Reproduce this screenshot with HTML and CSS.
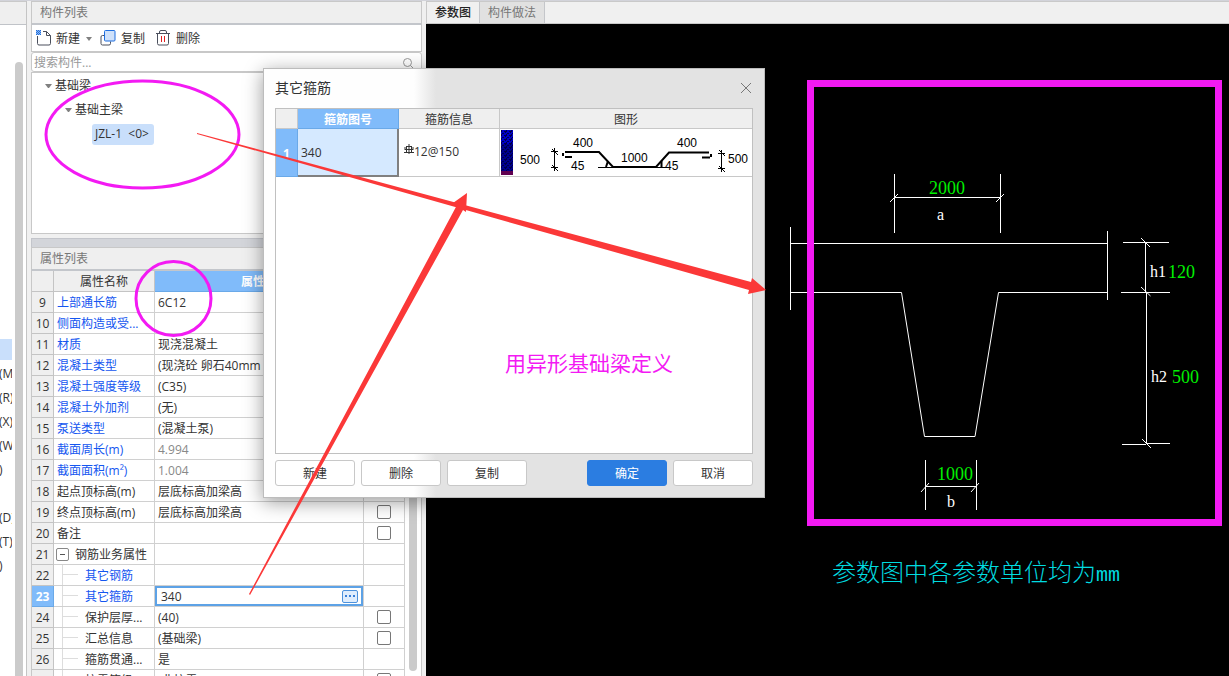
FILE: index.html
```html
<!DOCTYPE html>
<html lang="zh-CN">
<head>
<meta charset="utf-8">
<title>构件列表</title>
<link rel="stylesheet" href="styles.css">
</head>
<body>
<div class="app">
  <aside class="nav">
    <div class="nav-head"></div>
    <div class="nav-body">
      <ul class="nav-list">
        <li class="active"></li><li>(M</li><li>(R)</li><li>(X)</li><li>(W</li><li>)</li><li></li><li>(D)</li><li>(T)</li><li>)</li>
      </ul>
      <div class="nav-scroll"></div>
    </div>
  </aside>

  <div class="side">
    <section class="components">
      <h2 class="panel-title">构件列表</h2>
      <div class="toolbar">
        <button type="button" class="tool">
          <svg width="16" height="16" viewBox="0 0 16 16"><path d="M1.500 6v7.500a1.500 1.500 0 0 0 1.500 1.500h10a1.500 1.500 0 0 0 1.500-1.500V5.500L10.500 1.500H7M10.500 1.500v4h4" fill="none" stroke="#4a4f5c"/><path d="M0 0h1v1H0zM2 0h1v1H2zM4 0h1v1H4zM1 1h1v1H1zM3 1h1v1H3zM0 2h1v1H0zM2 2h1v1H2zM4 2h1v1H4zM1 3h1v1H1zM3 3h1v1H3zM0 4h1v1H0zM2 4h1v1H2zM4 4h1v1H4z" fill="#1f6fe0"/><path d="M0 0h5v5H0z" fill="#1f6fe0" opacity=".5"/></svg>
          新建<span class="drop"></span></button>
        <button type="button" class="tool">
          <svg width="16" height="16" viewBox="0 0 16 16"><path d="M4.500 5.500h-2a1.500 1.500 0 0 0-1.500 1.500v6.500a1.500 1.500 0 0 0 1.500 1.500h6.500a1.500 1.500 0 0 0 1.500-1.500v-2" fill="none" stroke="#4a4f5c"/><rect x="4.500" y="0.500" width="10.500" height="10.500" rx="1" fill="#cfe1fa" stroke="#1f6fe0"/></svg>
          复制</button>
        <button type="button" class="tool">
          <svg width="16" height="16" viewBox="0 0 16 16"><path d="M1 3.500h14M2.500 3.500v10a1.500 1.500 0 0 0 1.500 1.500h8a1.500 1.500 0 0 0 1.500-1.500v-10M4.500 3.500v-1.500a1.500 1.500 0 0 1 1.500-1.500h4a1.500 1.500 0 0 1 1.500 1.500v1.500" fill="none" stroke="#4a4f5c"/><path d="M6.500 6v6M9.500 6v6" stroke="#e02020"/></svg>
          删除</button>
      </div>
      <label class="search">
        <input type="text" placeholder="搜索构件..." aria-label="搜索构件">
        <svg width="12" height="12" viewBox="0 0 12 12"><circle cx="5.500" cy="5.500" r="4" fill="none" stroke="#999"/><path d="M8.500 8.500l2.500 2.500" stroke="#999"/></svg>
      </label>
      <div class="tree">
        <div class="node"><span class="drop"></span>基础梁</div>
        <div class="node level2"><span class="drop"></span>基础主梁</div>
        <div class="node level3"><span class="picked">JZL-1&nbsp; &lt;0&gt;</span></div>
      </div>
    </section>

    <section class="properties">
      <div class="splitter"></div>
      <h2 class="panel-title">属性列表</h2>
      <div class="grid-wrap">
        <table class="grid">
          <colgroup><col class="c-no"><col class="c-name"><col><col class="c-check"></colgroup>
          <thead><tr><th></th><th>属性名称</th><th class="sel">属性值</th><th>附加</th></tr></thead>
          <tbody>
            <tr><th>9</th><td class="link">上部通长筋</td><td>6C12</td><td><input type="checkbox" aria-label="附加 9"></td></tr>
            <tr><th>10</th><td class="link">侧面构造或受...</td><td></td><td><input type="checkbox" aria-label="附加 10"></td></tr>
            <tr><th>11</th><td class="link">材质</td><td>现浇混凝土</td><td><input type="checkbox" aria-label="附加 11"></td></tr>
            <tr><th>12</th><td class="link">混凝土类型</td><td>(现浇砼 卵石40mm 32.5)</td><td><input type="checkbox" aria-label="附加 12"></td></tr>
            <tr><th>13</th><td class="link">混凝土强度等级</td><td>(C35)</td><td><input type="checkbox" aria-label="附加 13"></td></tr>
            <tr><th>14</th><td class="link">混凝土外加剂</td><td>(无)</td><td></td></tr>
            <tr><th>15</th><td class="link">泵送类型</td><td>(混凝土泵)</td><td></td></tr>
            <tr><th>16</th><td class="link">截面周长(m)</td><td class="dim">4.994</td><td><input type="checkbox" aria-label="附加 16"></td></tr>
            <tr><th>17</th><td class="link">截面面积(m²)</td><td class="dim">1.004</td><td><input type="checkbox" aria-label="附加 17"></td></tr>
            <tr><th>18</th><td>起点顶标高(m)</td><td>层底标高加梁高</td><td></td></tr>
            <tr><th>19</th><td>终点顶标高(m)</td><td>层底标高加梁高</td><td><input type="checkbox" aria-label="附加 19"></td></tr>
            <tr><th>20</th><td>备注</td><td></td><td><input type="checkbox" aria-label="附加 20"></td></tr>
            <tr><th>21</th><td class="group"><button type="button" class="fold" aria-label="折叠"></button>钢筋业务属性</td><td></td><td></td></tr>
            <tr><th>22</th><td class="child link">其它钢筋</td><td></td><td></td></tr>
            <tr><th class="sel">23</th><td class="child link">其它箍筋</td><td class="edit"><div class="editor"><input type="text" value="340" aria-label="其它箍筋"><button type="button" class="more" aria-label="更多"><i></i><i></i><i></i></button></div></td><td></td></tr>
            <tr><th>24</th><td class="child">保护层厚...</td><td>(40)</td><td><input type="checkbox" aria-label="附加 24"></td></tr>
            <tr><th>25</th><td class="child">汇总信息</td><td>(基础梁)</td><td><input type="checkbox" aria-label="附加 25"></td></tr>
            <tr><th>26</th><td class="child">箍筋贯通...</td><td>是</td><td></td></tr>
            <tr><th></th><td class="child">抗震等级...</td><td>(非抗震)</td><td><input type="checkbox" aria-label="附加 27"></td></tr>
          </tbody>
        </table>
        <div class="grid-scroll"><div class="thumb"></div></div>
      </div>
    </section>
  </div>

  <main class="view">
    <div class="tabs"><button type="button" class="tab on">参数图</button><button type="button" class="tab">构件做法</button></div>
    <div class="canvas">
      <svg class="drawing" width="803" height="652" viewBox="426 24 803 652">
        <g class="lines">
          <path d="M894.500 174v59M1000.500 174v59M894 197.500h107M890 202l8-8M996 202l8-8"/>
          <path d="M790.500 227v83M1107.500 231v69M790 243.500h317M790 292.500h111.500L924.500 436.500h50.500L998.500 292.500h109"/>
          <path d="M1123 242.500h46M1121 292.500h49M1145.500 242v50M1146.500 292v152M1141 238l9 9M1141 287l9.500 9M1122 444.500h24M1146 443.500h24M1142 439l9 9"/>
          <path d="M925.500 460v50M976.500 460v50M925 486.500h52M921 492l8-9M971 492l8-9"/>
        </g>
        <g class="dims"><text x="929" y="194">2000</text><text x="1168" y="278">120</text><text x="1172" y="383">500</text><text x="937" y="480">1000</text></g>
        <g class="names"><text x="937" y="220">a</text><text x="1150" y="277">h1</text><text x="1151" y="382">h2</text><text x="947" y="507">b</text></g>
        <text class="caption" x="832" y="581">参数图中各参数单位均为<tspan class="unit">mm</tspan></text>
      </svg>
    </div>
  </main>

  <div class="dialog" role="dialog" aria-label="其它箍筋">
    <div class="dialog-head"><h1>其它箍筋</h1>
      <button type="button" class="close" aria-label="关闭"><svg width="12" height="12" viewBox="0 0 12 12"><path d="M1 1l10 10M11 1L1 11" stroke="#777"/></svg></button></div>
    <div class="sheet">
      <table class="stirrups">
        <colgroup><col class="s-no"><col class="s-col"><col class="s-col"><col></colgroup>
        <thead><tr><th></th><th class="sel">箍筋图号</th><th>箍筋信息</th><th>图形</th></tr></thead>
        <tbody><tr><th class="sel">1</th><td class="current">340</td>
          <td class="info"><svg width="10" height="12" viewBox="0 0 10 12"><path d="M0 8.500h10M5 0v10M2.500 2v6.500M7.500 2v6.500M2.500 2.500h5M1 3v3M9 3v3M1 5.500h8" fill="none" stroke="#333"/></svg>12@150</td>
          <td class="shape"><svg width="252" height="47" viewBox="500 129 252 47">
            <defs><pattern id="grain" width="5" height="4" patternUnits="userSpaceOnUse"><path d="M0 0h1v1H0zM2 1h2v1H2zM1 2h1v1H1zM4 3h1v1H4zM0 3h2v1H0z" fill="#00004a"/></pattern></defs>
            <rect x="501" y="130" width="12" height="42" fill="#0000c8"/><rect x="501" y="144" width="12" height="28" fill="#000090"/><rect x="501" y="130" width="12" height="42" fill="url(#grain)"/><rect x="501" y="171" width="12" height="4" fill="#600050"/>
            <path d="M565 152h34l14 15h43l13-14.500h40M565 157h7M702 157.500h8" fill="none" stroke="#000" stroke-width="2"/>
            <path d="M562 153h2v3h-2zM710 154h2v3h-2z"/>
            <path d="M598 167.500h15M554.500 148v23M551 151.500h7M551 167.500h7M552 149l6 6M552 165l6 6M721.500 150v22M718 153.500h7M718 168.500h7M719 150l6 6M719 166l6 6M656 167.500h10" fill="none" stroke="#000"/>
            <path d="M608 161l-2 6M661.500 161v6" fill="none" stroke="#000" stroke-width="2"/>
            <g class="marks"><text x="520" y="164">500</text><text x="573" y="147">400</text><text x="571" y="170">45</text><text x="621" y="162">1000</text><text x="677" y="147">400</text><text x="665" y="170">45</text><text x="728" y="163">500</text></g>
          </svg></td></tr></tbody>
      </table>
    </div>
    <div class="actions"><button type="button">新建</button><button type="button">删除</button><button type="button">复制</button><span class="fill"></span><button type="button" class="primary">确定</button><button type="button">取消</button></div>
  </div>

  <svg class="notes" width="1229" height="676" viewBox="0 0 1229 676">
    <g fill="none" stroke="#f31af3"><ellipse cx="142.500" cy="134.500" rx="96.500" ry="53.500" stroke-width="3"/><ellipse cx="173.500" cy="298.500" rx="37.500" ry="37" stroke-width="3"/><rect x="810.500" y="83.500" width="408" height="439" stroke-width="7"/></g>
    <g fill="#fb3838"><path d="M197 133L751 282L752 278L766 290L748 294L749 290L197 134z"/><path d="M249 594L457 205L453 203L467 193L466 212L463 210L250 595z"/></g>
    <text class="remark" x="505" y="371">用异形基础梁定义</text>
  </svg>
</div>
</body>
</html>
```
FILE: styles.css
```css
* { box-sizing: border-box; }
body { margin: 0; font: 12px/16px "Open Sans", "Noto Sans CJK SC", sans-serif; color: #333; background: #f0f0f0; overflow: hidden; }
button, input { font: inherit; color: inherit; }
h1, h2, ul { margin: 0; padding: 0; }
.app { position: relative; display: flex; height: 100vh; overflow: hidden; border-top: 1px solid #d2d3da; }

.nav { width: 27px; flex: none; display: flex; flex-direction: column; border-right: 1px solid #c4c4c4; margin-right: 4px; }
.nav-head { height: 24px; flex: none; border-top: 1px solid #c9c9c9; border-bottom: 1px solid #c0c3c8; background: #efefef; }
.nav-body { flex: 1; display: flex; background: #fff; }
.nav-list { list-style: none; width: 12px; margin-top: 314px; overflow: hidden; }
.nav-list li { height: 24px; line-height: 24px; white-space: nowrap; text-indent: -1px; }
.nav-list .active { height: 21px; margin-bottom: 2px; background: #c9dffb; }
.nav-scroll { width: 8px; margin: 37px 0 0 3px; background: #cbcbcb; border-radius: 4px 4px 0 0; }

.side { width: 391px; flex: none; display: flex; flex-direction: column; margin-right: 4px; }
.panel-title { height: 24px; padding: 0 8px; font-size: 12px; font-weight: 400; line-height: 22px; color: #777; background: #efefef; border: 1px solid #c8c8c8; border-bottom: 2px solid #c3c6cb; }
.toolbar { display: flex; gap: 8px; height: 27px; padding: 2px 4px 0; background: #fff; border: 1px solid #c8c8c8; border-top: 0; }
.tool { display: flex; align-items: center; gap: 4px; padding: 0; border: 0; background: none; }
.tool svg { margin-bottom: 2px; }
.drop { width: 7px; border: 3px solid transparent; border-top: 4px solid #808080; border-bottom: 0; }
.tool .drop { width: 6px; margin-left: 2px; }
.tool + .tool { gap: 5px; }
.tool + .tool + .tool { margin-left: 2px; }
.search { display: flex; align-items: center; height: 20px; padding: 1px 7px 0 2px; background: #fff; border: 1px solid #c8c8c8; border-radius: 3px; }
.search input { flex: 1; height: 16px; border: 0; padding: 0; background: none; outline: 0; }
.search input::placeholder { color: #999; }
.tree { height: 162px; padding-top: 1px; background: #fff; border: 1px solid #c8c8c8; }
.node { display: flex; align-items: center; gap: 3px; height: 24px; padding-left: 13px; }
.level2 { padding-left: 33px; }
.level3 { padding-left: 60px; }
.picked { padding: 2px 5px 3px 3px; background: #c9dffb; border-radius: 3px; }

.properties { display: flex; flex-direction: column; flex: 1; min-height: 0; margin-top: 4px; }
.splitter { height: 9px; flex: none; background: #d3d5da; border: 1px solid #c3c5cb; border-bottom: 0; }
.properties .panel-title { flex: none; }
.grid-wrap { display: flex; flex: 1; min-height: 0; overflow: hidden; border: 1px solid #c8c8c8; border-width: 0 1px; background: #fff; }
.grid { flex: 1; border-collapse: separate; border-spacing: 0; table-layout: fixed; }
.c-no { width: 22px; } .c-name { width: 101px; } .c-check { width: 41px; }
.grid th, .grid td { height: 21px; padding: 2px 0 0 3px; line-height: 16px; white-space: nowrap; overflow: hidden; border: 0 solid #d0d0d0; border-width: 0 1px 1px 0; font-weight: 400; text-align: left; }
.grid th { padding: 2px 0 0; text-align: center; background: #efefef; border-color: #c4c4c4; }
.grid .sel, .stirrups .sel { background: #80bbfa; color: #fff; font-weight: 700; border-color: #6aa9e8; }
.grid .link { color: #1456f0; }
.grid .dim { color: #888; }
.grid td:last-child { padding: 0; text-align: center; }
.grid input[type=checkbox] { appearance: none; display: block; width: 14px; height: 14px; margin: 0 auto; border: 1px solid #777; border-radius: 2px; background: #fff; }
.grid .group { padding-left: 2px; }
.fold { display: inline-block; vertical-align: middle; width: 13px; height: 13px; margin: 0 6px 2px 0; padding: 0 3px; border: 1px solid #888; border-radius: 2px; background: linear-gradient(#555, #555) center / 5px 1px no-repeat #fff; }
.grid .child { padding-left: 31px; background: linear-gradient(#ddd, #ddd) 8px 0 / 1px 100% no-repeat, linear-gradient(#ddd, #ddd) 8px 9px / 16px 1px no-repeat; }
.grid .edit { padding: 0; }
.editor { display: flex; align-items: center; height: 20px; padding-right: 3px; border: 2px solid #5da2e6; }
.editor input { flex: 1; min-width: 0; height: 16px; padding: 1px 0 0 4px; border: 0; outline: 0; }
.more { display: flex; justify-content: center; align-items: center; gap: 2px; width: 16px; height: 13px; padding: 0; border: 1px solid #4d92dc; border-radius: 2px; background: #dfedfd; }
.more i { width: 2px; height: 2px; background: #3a80d8; }
.grid-scroll { width: 16px; flex: none; display: flex; justify-content: center; padding: 0 0 5px; }
.thumb { width: 8px; background: #cbcbcb; border-radius: 4px; }

.view { flex: 1; min-width: 0; display: flex; flex-direction: column; }
.tabs { display: flex; height: 23px; flex: none; border: 1px solid #c9c9c9; border-width: 1px 0 1px 1px; }
.tab { padding: 1px 8px 0; border: 0; border-right: 1px solid #c4c6ca; background: #e1e1e1; color: #777; }
.tab.on { background: #f0f0f0; color: #222; font-weight: 500; }
.canvas { flex: 1; min-height: 0; overflow: hidden; background: #000; }
.drawing { display: block; }
.lines { fill: none; stroke: #fff; stroke-width: 1; }
.dims { font: 18px "Liberation Serif", serif; fill: #00f000; }
.names { font: 16px "Liberation Serif", serif; fill: #fff; }
.caption { font: 300 24px "Noto Sans CJK SC", sans-serif; fill: #00dce0; }
.unit { font: 20px "Liberation Mono", monospace; }

.dialog { position: absolute; left: 263px; top: 67px; width: 502px; display: flex; flex-direction: column; padding: 0 11px 11px; border: 1px solid #bcbcbc; background: linear-gradient(90deg, #fefefe 150px, #e3e3e3 172px); box-shadow: 0 4px 18px rgba(0, 0, 0, 0.4); }
.dialog-head { display: flex; align-items: center; justify-content: space-between; height: 39px; padding-bottom: 2px; }
.dialog-head h1 { font-size: 14px; font-weight: 400; line-height: 20px; }
.close { display: flex; padding: 0 1px 0 4px; border: 0; background: none; }
.sheet { height: 346px; border: 1px solid #c0c0c0; background: #fff; }
.stirrups { width: 100%; border-collapse: separate; border-spacing: 0; table-layout: fixed; }
.s-no { width: 22px; } .s-col { width: 101px; }
.stirrups th, .stirrups td { padding: 0; border: 0 solid #c8c8c8; border-width: 0 1px 1px 0; font-weight: 400; text-align: center; }
.stirrups th { height: 20px; padding-top: 2px; background: #efefef; }
.stirrups tr > :last-child { border-right: 0; }
.stirrups td { height: 48px; text-align: left; }
.stirrups .current { padding: 2px 0 0 3px; background: #d5e9ff; border: 2px solid #808080; border-width: 0 2px 2px 0; }
.stirrups .info { padding: 0 0 2px 5px; white-space: nowrap; }
.shape svg { display: block; width: 252px; height: 47px; }
.marks { font: 12px "Liberation Sans", sans-serif; }
.actions { display: flex; gap: 6px; margin-top: 6px; }
.actions button { width: 80px; height: 26px; padding: 2px 0 0; border: 1px solid #c8c8c8; border-radius: 3px; background: #fff; }
.actions .primary { border-color: #2b7de1; background: #2b7de1; color: #fff; }
.fill { flex: 1; }

.notes { position: absolute; left: 0; top: -1px; pointer-events: none; }
.remark { font: 400 21px "Noto Sans CJK SC", sans-serif; fill: #f31af3; }
```
